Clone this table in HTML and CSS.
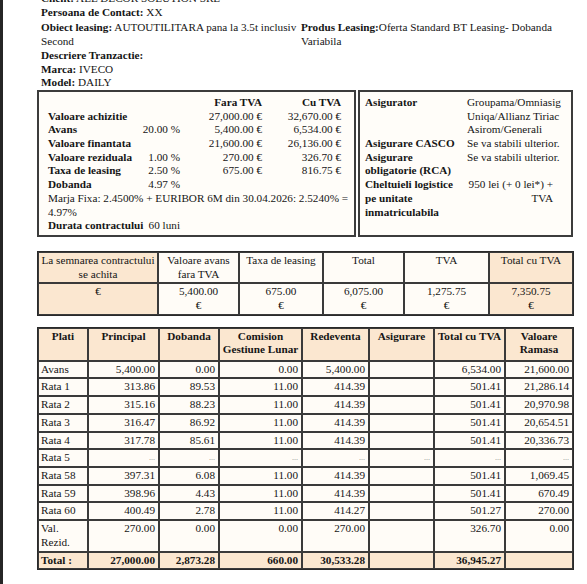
FILE: index.html
```html
<!DOCTYPE html>
<html lang="ro">
<head>
<meta charset="utf-8">
<title>Oferta leasing</title>
<link rel="stylesheet" href="styles.css">
</head>
<body>
<div class="viewer">
  <div class="edge"></div>
  <main class="doc">
    <div class="info">
      <p><b>Client:</b> ALL DECOR SOLUTION SRL</p>
      <p><b>Persoana de Contact:</b> XX</p>
      <div class="two">
        <p class="obj"><b>Obiect leasing:</b> AUTOUTILITARA pana la 3.5t inclusiv Second</p>
        <p class="prod"><b>Produs Leasing:</b>Oferta Standard BT Leasing- Dobanda Variabila</p>
      </div>
      <p><b>Descriere Tranzactie:</b></p>
      <p><b>Marca:</b> IVECO</p>
      <p><b>Model:</b> DAILY</p>
    </div>

    <div class="boxes">
      <section class="box fin">
        <table class="fin-t">
          <colgroup><col class="c-lab"><col class="c-pct"><col class="c-fara"><col class="c-cu"><col class="c-pad"></colgroup>
          <tr><td></td><td></td><th class="num">Fara TVA</th><th class="num">Cu TVA</th><td></td></tr>
          <tr><th>Valoare achizitie</th><td></td><td class="num">27,000.00 €</td><td class="num">32,670.00 €</td><td></td></tr>
          <tr><th>Avans</th><td class="num">20.00 %</td><td class="num">5,400.00 €</td><td class="num">6,534.00 €</td><td></td></tr>
          <tr><th>Valoare finantata</th><td></td><td class="num">21,600.00 €</td><td class="num">26,136.00 €</td><td></td></tr>
          <tr><th>Valoare reziduala</th><td class="num">1.00 %</td><td class="num">270.00 €</td><td class="num">326.70 €</td><td></td></tr>
          <tr><th>Taxa de leasing</th><td class="num">2.50 %</td><td class="num">675.00 €</td><td class="num">816.75 €</td><td></td></tr>
          <tr><th>Dobanda</th><td class="num">4.97 %</td><td></td><td></td><td></td></tr>
          <tr><td colspan="5" class="note">Marja Fixa: 2.4500% + EURIBOR 6M din 30.04.2026: 2.5240% = 4.97%</td></tr>
          <tr><th>Durata contractului</th><td class="num">60 luni</td><td></td><td></td><td></td></tr>
        </table>
      </section>
      <section class="box ins">
        <table class="ins-t">
          <colgroup><col class="c-ilab"><col class="c-ival"></colgroup>
          <tr><th>Asigurator</th><td>Groupama/Omniasig<br>Uniqa/Allianz Tiriac<br>Asirom/Generali</td></tr>
          <tr><th>Asigurare CASCO</th><td>Se va stabili ulterior.</td></tr>
          <tr><th>Asigurare obligatorie (RCA)</th><td>Se va stabili ulterior.</td></tr>
          <tr><th>Cheltuieli logistice pe unitate inmatriculabila</th><td class="right">950 lei (+ 0 lei*) + TVA</td></tr>
        </table>
      </section>
    </div>

    <table class="grid sum">
      <colgroup><col class="s1"><col class="s2"><col class="s3"><col class="s4"><col class="s5"><col class="s6"></colgroup>
      <tr>
        <td class="peach">La semnarea contractului se achita</td>
        <td>Valoare avans fara TVA</td>
        <td>Taxa de leasing</td>
        <td>Total</td>
        <td>TVA</td>
        <td class="peach">Total cu TVA</td>
      </tr>
      <tr>
        <td class="peach">€</td>
        <td>5,400.00<br>€</td>
        <td>675.00<br>€</td>
        <td>6,075.00<br>€</td>
        <td>1,275.75<br>€</td>
        <td class="peach">7,350.75<br>€</td>
      </tr>
    </table>

    <table class="grid sched">
      <colgroup><col class="p1"><col class="p2"><col class="p3"><col class="p4"><col class="p5"><col class="p6"><col class="p7"><col class="p8"></colgroup>
      <thead>
        <tr><th>Plati</th><th>Principal</th><th>Dobanda</th><th>Comision Gestiune Lunar</th><th>Redeventa</th><th>Asigurare</th><th>Total cu TVA</th><th>Valoare Ramasa</th></tr>
      </thead>
      <tbody>
        <tr><td class="lab">Avans</td><td>5,400.00</td><td>0.00</td><td>0.00</td><td>5,400.00</td><td></td><td>6,534.00</td><td>21,600.00</td></tr>
        <tr><td class="lab">Rata 1</td><td>313.86</td><td>89.53</td><td>11.00</td><td>414.39</td><td></td><td>501.41</td><td>21,286.14</td></tr>
        <tr><td class="lab">Rata 2</td><td>315.16</td><td>88.23</td><td>11.00</td><td>414.39</td><td></td><td>501.41</td><td>20,970.98</td></tr>
        <tr><td class="lab">Rata 3</td><td>316.47</td><td>86.92</td><td>11.00</td><td>414.39</td><td></td><td>501.41</td><td>20,654.51</td></tr>
        <tr><td class="lab">Rata 4</td><td>317.78</td><td>85.61</td><td>11.00</td><td>414.39</td><td></td><td>501.41</td><td>20,336.73</td></tr>
        <tr class="gap"><td class="lab">Rata 5</td><td>...</td><td>...</td><td>...</td><td>...</td><td>...</td><td>...</td><td>...</td></tr>
        <tr><td class="lab">Rata 58</td><td>397.31</td><td>6.08</td><td>11.00</td><td>414.39</td><td></td><td>501.41</td><td>1,069.45</td></tr>
        <tr><td class="lab">Rata 59</td><td>398.96</td><td>4.43</td><td>11.00</td><td>414.39</td><td></td><td>501.41</td><td>670.49</td></tr>
        <tr><td class="lab">Rata 60</td><td>400.49</td><td>2.78</td><td>11.00</td><td>414.27</td><td></td><td>501.27</td><td>270.00</td></tr>
        <tr><td class="lab">Val. Rezid.</td><td>270.00</td><td>0.00</td><td>0.00</td><td>270.00</td><td></td><td>326.70</td><td>0.00</td></tr>
      </tbody>
      <tfoot>
        <tr><td class="lab">Total :</td><td>27,000.00</td><td>2,873.28</td><td>660.00</td><td>30,533.28</td><td></td><td>36,945.27</td><td></td></tr>
      </tfoot>
    </table>
  </main>
</div>
</body>
</html>
```

FILE: styles.css
```css
html, body {
  margin: 0;
  background: #ffffff;
}

body {
  font-family: "Liberation Serif", "Times New Roman", serif;
  font-size: 11.2px;
  line-height: 13.7px;
  color: #151515;
  overflow: hidden;
}

p { margin: 0; }

.viewer {
  display: flex;
  height: 584px;
}

.edge {
  flex: none;
  width: 3px;
  background: #262626;
}

.doc {
  padding-left: 34px;
  margin-top: -8px;
}

.info {
  padding-left: 4px;
}

.two {
  display: flex;
  margin-top: 2px;
}

.two .obj { width: 260px; }
.two .prod { width: 255px; }

/* ---- boxes ---- */
.boxes {
  display: flex;
  gap: 2px;
}

.box {
  border: 2px solid #3c3c3c;
  background: #fffdf9;
  box-sizing: border-box;
}

.box.fin {
  width: 319px;
  padding: 4px 2px 2px 9px;
}

.box.ins {
  width: 215px;
  padding: 4px 6px 2px 5px;
}

.box table {
  border-collapse: collapse;
  table-layout: fixed;
}

.box th, .box td {
  padding: 0;
  text-align: left;
  vertical-align: top;
  font-weight: normal;
}

.box th { font-weight: bold; white-space: nowrap; }
.box .num { text-align: right; white-space: nowrap; }

.fin-t { width: 304px; }
.c-lab { width: 94px; }
.c-pct { width: 38px; }
.c-fara { width: 82px; }
.c-cu { width: 79px; }
.c-pad { width: 11px; }

.ins-t { width: 200px; }
.c-ilab { width: 98px; }
.c-ival { width: 102px; }
.ins-t th { white-space: normal; }
.ins-t td { padding-left: 4px; }
.ins-t td.right { text-align: right; padding-right: 12px; }

/* ---- grids ---- */
.grid {
  border-collapse: separate;
  border-spacing: 0;
  table-layout: fixed;
  width: 535px;
  border: 1px solid #2a2a2a;
}

.grid th, .grid td {
  border: 1px solid #3a3a3a;
  background: #fffcf7;
  vertical-align: top;
}

.grid .peach,
.grid thead th,
.grid tfoot td {
  background: #fbe7d0;
}

.sum {
  margin-top: 14px;
}

.sum td {
  text-align: center;
  padding: 1px 2px 1px;
}

.s1 { width: 120px; }
.s2 { width: 81px; }
.s3 { width: 84px; }
.s4 { width: 81px; }
.s5 { width: 85px; }
.s6 { width: 84px; }

.sched {
  margin-top: 11px;
}

.sched th {
  font-weight: bold;
  text-align: center;
  padding: 1px 2px 2px;
  height: 28px;
}

.sched td {
  text-align: right;
  padding: 1px 3px 1px 2px;
}

.sched td.lab { text-align: left; padding-left: 2px; }
.sched tfoot td { font-weight: bold; }
.sched .gap td { color: #8a8a8a; font-size: 8px; }
.sched .gap td.lab { color: #151515; font-size: 11.2px; }

.p1 { width: 50px; }
.p2 { width: 71px; }
.p3 { width: 60px; }
.p4 { width: 83px; }
.p5 { width: 67px; }
.p6 { width: 65px; }
.p7 { width: 71px; }
.p8 { width: 68px; }
```
